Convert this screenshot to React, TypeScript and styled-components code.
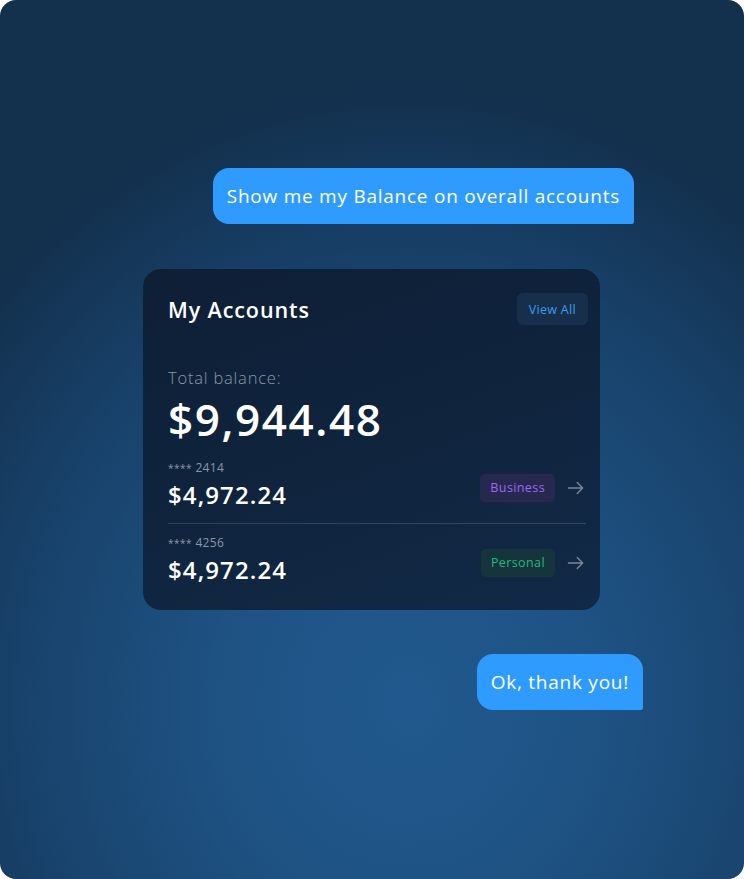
import React from "react";
import styled, { createGlobalStyle } from "styled-components";

const GlobalStyle = createGlobalStyle`
  html, body {
    margin: 0;
    padding: 0;
    background: #ffffff;
  }
  body {
    font-family: "Open Sans", "Noto Sans", sans-serif;
    -webkit-font-smoothing: antialiased;
  }
`;

const ArrowIcon = () => (
  <svg width="20" height="20" viewBox="0 0 24 24" fill="none" stroke="currentColor" strokeWidth="1.7" strokeLinecap="round" strokeLinejoin="round">
    <path d="M3 12h17M13.5 5.5l6.5 6.5-6.5 6.5" />
  </svg>
);

const accounts = [
  { id: "2414", amount: "$4,972.24", type: "Business", tone: "business" as const },
  { id: "4256", amount: "$4,972.24", type: "Personal", tone: "personal" as const },
];

const App: React.FC = () => (
  <>
    <GlobalStyle />
    <Screen>
      <Bubble $right={110}>Show me my Balance on overall accounts</Bubble>

      <Card>
        <CardHeader>
          <CardTitle>My Accounts</CardTitle>
          <ViewAllButton>View All</ViewAllButton>
        </CardHeader>

        <TotalLabel>Total balance:</TotalLabel>
        <TotalAmount>$9,944.48</TotalAmount>

        <AccountList>
          {accounts.map((a) => (
            <AccountRow key={a.id}>
              <AccountInfo>
                <AccountNumber>
                  <Stars>****</Stars> {a.id}
                </AccountNumber>
                <AccountAmount>{a.amount}</AccountAmount>
              </AccountInfo>
              <Badge $tone={a.tone}>{a.type}</Badge>
              <ArrowWrap>
                <ArrowIcon />
              </ArrowWrap>
            </AccountRow>
          ))}
        </AccountList>
      </Card>

      <Bubble $right={101}>Ok, thank you!</Bubble>
    </Screen>
  </>
);

const Screen = styled.div`
  width: 744px;
  height: 879px;
  box-sizing: border-box;
  border-radius: 16px;
  overflow: hidden;
  padding-top: 168px;
  display: flex;
  flex-direction: column;
  background:
    radial-gradient(ellipse 75% 70% at 55% 80%, #21598e 0%, #1e5283 35%, #18426b 70%, #13304d 100%);
`;

const Bubble = styled.div<{ $right: number }>`
  align-self: flex-end;
  margin-right: ${(p) => p.$right}px;
  background: #2f9bff;
  color: #ffffff;
  font-size: 19px;
  letter-spacing: 0.75px;
  line-height: 56px;
  height: 56px;
  padding: 0 14px;
  border-radius: 16px 16px 2px 16px;
  white-space: nowrap;
  & + * {
    margin-top: 45px;
  }
`;

const Card = styled.div`
  margin-left: 143px;
  width: 457px;
  height: 341px;
  box-sizing: border-box;
  padding: 24px 14px 0 25px;
  border-radius: 18px;
  background: linear-gradient(160deg, #0e1f36 0%, #10243e 55%, #112a47 100%);
  display: flex;
  flex-direction: column;
  & + * {
    margin-top: 44px;
  }
`;

const CardHeader = styled.div`
  display: flex;
  align-items: center;
  justify-content: space-between;
  height: 32px;
`;

const CardTitle = styled.h2`
  margin: 0;
  color: #ffffff;
  font-size: 21.5px;
  font-weight: 600;
  letter-spacing: 0.9px;
`;

const ViewAllButton = styled.button`
  height: 32px;
  margin-right: -2px;
  padding: 0 12px;
  border: none;
  border-radius: 6px;
  background: #172f4b;
  color: #3a9cf2;
  font-family: inherit;
  font-size: 12.5px;
  letter-spacing: 0.3px;
  cursor: pointer;
`;

const TotalLabel = styled.div`
  margin-top: 42px;
  color: #8a97a8;
  font-size: 16.5px;
  font-weight: 300;
  line-height: 22px;
  letter-spacing: 0.8px;
`;

const TotalAmount = styled.div`
  margin-top: 5px;
  color: #ffffff;
  font-size: 44px;
  font-weight: 600;
  line-height: 50px;
  letter-spacing: 1.6px;
`;

const AccountList = styled.div`
  margin-top: 16px;
  display: flex;
  flex-direction: column;
`;

const AccountRow = styled.div`
  display: flex;
  align-items: center;
  padding: 11px 0 0;
  &:first-child {
    border-bottom: 1.5px solid rgba(255, 255, 255, 0.14);
    padding: 0 0 13px;
  }
`;

const AccountInfo = styled.div`
  flex: 1;
  display: flex;
  flex-direction: column;
`;

const AccountNumber = styled.div`
  color: #8a97a8;
  font-size: 12px;
  line-height: 16px;
  letter-spacing: 0.3px;
`;

const Stars = styled.span`
  font-size: 10px;
  letter-spacing: 0.5px;
`;

const AccountAmount = styled.div`
  margin-top: 4px;
  color: #ffffff;
  font-size: 24px;
  font-weight: 600;
  line-height: 30px;
  letter-spacing: 1.1px;
`;

const Badge = styled.span<{ $tone: "business" | "personal" }>`
  margin-top: 6px;
  height: 28px;
  line-height: 28px;
  padding: 0 10px;
  border-radius: 5px;
  font-size: 12.5px;
  letter-spacing: 0.4px;
  background: ${(p) => (p.$tone === "business" ? "#272850" : "#16343c")};
  color: ${(p) => (p.$tone === "business" ? "#9a6af2" : "#1fba80")};
`;

const ArrowWrap = styled.span`
  display: flex;
  align-items: center;
  margin-top: 6px;
  margin-left: 11px;
  color: #7b8799;
`;

export default App;
